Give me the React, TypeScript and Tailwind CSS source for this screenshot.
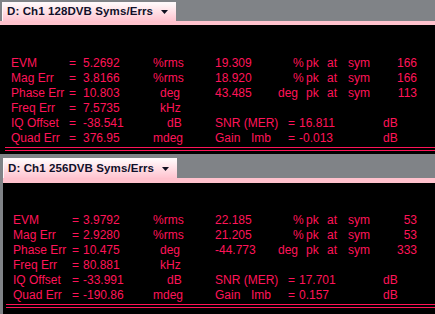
import React from "react";

type Row = {
  label: string;
  value: string;
  unit: string;
  unitPad: string;
  rv?: string;
  pre?: string;
  prePad?: string;
  num?: string;
  snr?: string;
  gain?: string;
};

const top: Row[] = [
  { label: "EVM", value: "5.2692", unit: "%rms", unitPad: "pl-[8px]", rv: "19.309", pre: "%", prePad: "pl-[15px]", num: "166" },
  { label: "Mag Err", value: "3.8166", unit: "%rms", unitPad: "pl-[8px]", rv: "18.920", pre: "%", prePad: "pl-[15px]", num: "166" },
  { label: "Phase Err", value: "10.803", unit: "deg", unitPad: "pl-[15px]", rv: "43.485", pre: "deg", prePad: "pl-0", num: "113" },
  { label: "Freq Err", value: "7.5735", unit: "kHz", unitPad: "pl-[15px]" },
  { label: "IQ Offset", value: "-38.541", unit: "dB", unitPad: "pl-[22px]", snr: "16.811" },
  { label: "Quad Err", value: "376.95", unit: "mdeg", unitPad: "pl-[8px]", gain: "-0.013" },
];

const bottom: Row[] = [
  { label: "EVM", value: "3.9792", unit: "%rms", unitPad: "pl-[8px]", rv: "22.185", pre: "%", prePad: "pl-[15px]", num: "53" },
  { label: "Mag Err", value: "2.9280", unit: "%rms", unitPad: "pl-[8px]", rv: "21.205", pre: "%", prePad: "pl-[15px]", num: "53" },
  { label: "Phase Err", value: "10.475", unit: "deg", unitPad: "pl-[15px]", rv: "-44.773", pre: "deg", prePad: "pl-0", num: "333" },
  { label: "Freq Err", value: "80.881", unit: "kHz", unitPad: "pl-[15px]" },
  { label: "IQ Offset", value: "-33.991", unit: "dB", unitPad: "pl-[22px]", snr: "17.701" },
  { label: "Quad Err", value: "-190.86", unit: "mdeg", unitPad: "pl-[8px]", gain: "0.157" },
];

const DataRow = ({ r, low }: { r: Row; low: boolean }) => {
  return (
    <div className="flex h-[15px] items-center whitespace-nowrap">
      <span className={low ? "w-[69px] shrink-0 pl-[10px]" : "w-[69px] shrink-0 pl-[11px]"}>{r.label}</span>
      <span className={low ? "w-[11px] shrink-0" : "w-[14px] shrink-0"}>=</span>
      <span className="w-[62px] shrink-0">{r.value}</span>
      <span className={`w-[70px] shrink-0 ${r.unitPad}`}>{r.unit}</span>
      {r.rv && (
        <>
          <span className="w-[63px] shrink-0">{r.rv}</span>
          <span className={`w-[28px] shrink-0 ${r.prePad}`}>{r.pre}</span>
          <span className="w-[21px] shrink-0">pk</span>
          <span className="w-[21px] shrink-0">at</span>
          <span className="flex w-[69px] shrink-0 justify-between">
            <span>sym</span>
            <span>{r.num}</span>
          </span>
        </>
      )}
      {r.snr && (
        <>
          <span className="w-[73px] shrink-0">SNR (MER)</span>
          <span className="w-[11px] shrink-0">=</span>
          <span className="w-[84px] shrink-0">{r.snr}</span>
          <span>dB</span>
        </>
      )}
      {r.gain && (
        <>
          <span className="w-[36px] shrink-0">Gain</span>
          <span className="w-[37px] shrink-0">Imb</span>
          <span className="w-[11px] shrink-0">=</span>
          <span className="w-[84px] shrink-0">{r.gain}</span>
          <span>dB</span>
        </>
      )}
    </div>
  );
};

const Panel = ({ title, rows, low }: { title: string; rows: Row[]; low: boolean }) => {
  return (
    <div className={low ? "ml-[3px] flex flex-col" : "flex flex-col pt-[2px]"}>
      <div className="flex">
        <div
          className={
            low
              ? "ml-0 flex h-[20px] w-[174px] items-center border-l border-t border-[#fff8fa] bg-linear-to-b from-[#fffafb] to-[#ffc4d0] pl-[4px]"
              : "ml-[2px] flex h-[19px] w-[174px] items-center border-l border-t border-[#fff8fa] bg-linear-to-b from-[#fffafb] to-[#ffc4d0] pl-[4px]"
          }
        >
          <span className="w-[150px] shrink-0 whitespace-nowrap text-[11.5px] font-bold tracking-[0.1px] text-[#10102a] [font-family:'Liberation_Sans',Arial,sans-serif]">
            {title}
          </span>
          <svg className="ml-[4px] shrink-0" width="7" height="4" viewBox="0 0 7 4">
            <polygon points="0,0 7,0 3.5,4" fill="#101020" />
          </svg>
        </div>
      </div>
      <div className={low ? "h-[5px] bg-[#ffc2cd]" : "h-[4px] bg-[#ffc2cd]"} />
      <div
        className={
          low
            ? "flex h-[131px] flex-col bg-black pt-[29px] text-[12px] text-[#ff1458] [font-family:'Liberation_Sans',Arial,sans-serif]"
            : "flex h-[129px] flex-col bg-black pt-[30px] text-[12px] text-[#ff1458] [font-family:'Liberation_Sans',Arial,sans-serif]"
        }
      >
        {rows.map((r) => (
          <DataRow key={r.label} r={r} low={low} />
        ))}
        <div className={low ? "ml-[3px] mt-[2px] h-px bg-[#ff1458]" : "ml-[5px] mt-[2px] h-px bg-[#ff1458]"} />
        <div className={low ? "ml-[3px] mt-[2px] h-px bg-[#ff1458]" : "ml-[5px] mt-[2px] h-px bg-[#ff1458]"} />
      </div>
    </div>
  );
};

const App = () => {
  return (
    <div className="flex h-[314px] w-[435px] flex-col gap-[4px] overflow-hidden bg-[#808387]">
      <Panel title="D: Ch1 128DVB Syms/Errs" rows={top} low={false} />
      <Panel title="D: Ch1 256DVB Syms/Errs" rows={bottom} low={true} />
    </div>
  );
};

export default App;
